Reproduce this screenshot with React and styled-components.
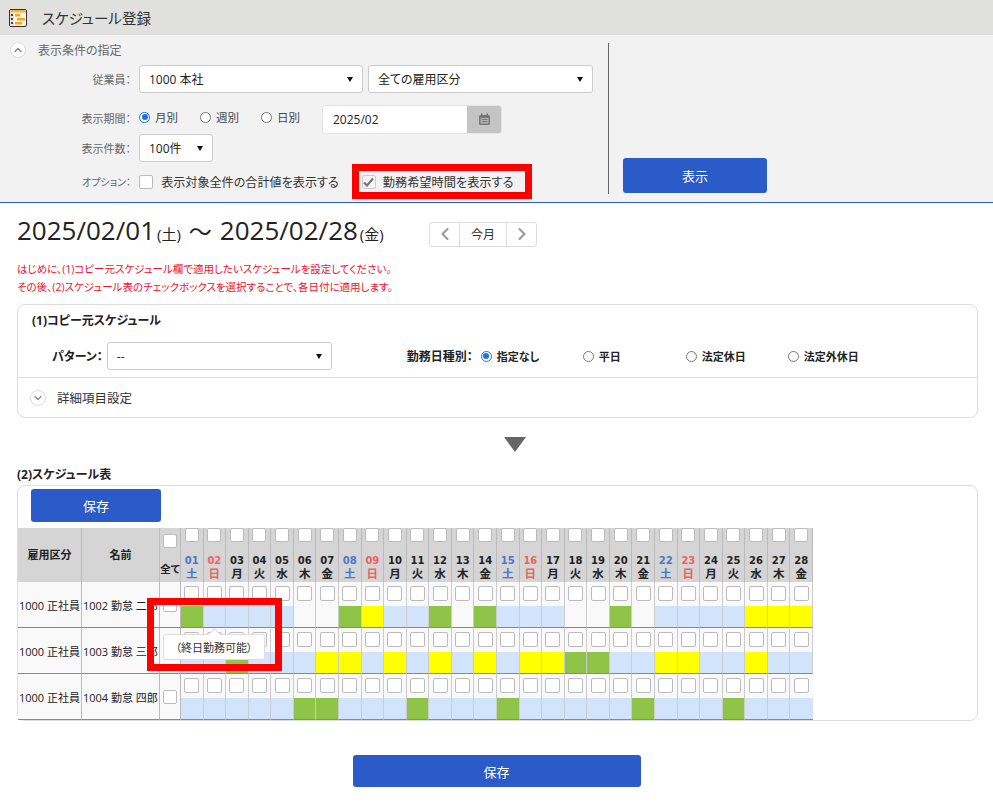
import React from 'react';
import styled, { createGlobalStyle } from 'styled-components';
import { ChevronLeft, ChevronRight, ChevronUp, ChevronDown } from 'lucide-react';

const GlobalStyle = createGlobalStyle`
  html, body { margin: 0; padding: 0; background: #fff; }
  body {
    font-family: "Open Sans", "Noto Sans CJK JP", sans-serif;
    font-feature-settings: "palt";
    color: #222;
    font-size: 12px;
  }
`;

const Page = styled.div`
  width: 993px;
  height: 810px;
  overflow: hidden;
`;

const TitleBar = styled.header`
  height: 35px;
  background: #e0e0de;
  display: flex;
  align-items: center;
  padding-left: 9px;
  gap: 15px;
  font-size: 14.5px;
  color: #333;
`;

const Conditions = styled.section`
  height: 168px;
  box-sizing: border-box;
  background: #f2f2f2;
  border-bottom: 1px solid #2a5bc8;
  display: flex;
  padding-top: 8px;
`;

const CondLeft = styled.div`
  width: 609px;
  height: 151px;
  box-sizing: border-box;
  border-right: 1px solid #666;
`;

const CondRight = styled.div`
  flex: 1;
  display: flex;
  align-items: flex-end;
  padding: 0 0 9px 14px;
`;

const SectionHead = styled.div`
  display: flex;
  align-items: center;
  gap: 12px;
  height: 14px;
  padding-left: 10px;
  color: #666;
  font-size: 12px;
`;

const RoundToggle = styled.span`
  width: 16px;
  height: 16px;
  flex: none;
  border-radius: 50%;
  border: 1.5px solid #ddd;
  background: #fff;
  box-sizing: border-box;
  display: inline-flex;
  align-items: center;
  justify-content: center;
  color: #888;
`;

const FormRow = styled.div`
  display: flex;
  align-items: center;
  height: ${p => p.$h}px;
  margin-top: ${p => p.$top || 0}px;
  gap: 5px;
`;

const FieldLabel = styled.span`
  width: 131px;
  margin-right: 3px;
  margin-bottom: ${p => p.$raise || 0}px;
  box-sizing: border-box;
  text-align: right;
  color: #666;
  font-size: ${p => p.$size || 11}px;
  white-space: nowrap;
`;

const Select = styled.div`
  width: ${p => p.$w}px;
  height: 28px;
  box-sizing: border-box;
  background: #fff;
  border: 1px solid #ccc;
  border-radius: 3px;
  display: flex;
  align-items: center;
  justify-content: space-between;
  padding: 0 9px;
  font-size: 12px;
  font-weight: 400;
  color: #222;
  &::after {
    content: "";
    border-left: 3.5px solid transparent;
    border-right: 3.5px solid transparent;
    border-top: 5px solid #111;
  }
`;

const RadioItem = styled.label`
  display: inline-flex;
  align-items: center;
  gap: ${p => p.$gap || 5}px;
  width: ${p => p.$w ? `${p.$w}px` : 'auto'};
  margin-bottom: ${p => p.$raise || 0}px;
  font-size: ${p => p.$size || 12}px;
  font-weight: ${p => p.$bold ? 700 : 400};
  color: ${p => p.$bold ? '#222' : '#444'};
  white-space: nowrap;
`;

const RadioDot = styled.span`
  width: 11px;
  height: 11px;
  border-radius: 50%;
  box-sizing: border-box;
  background: #fff;
  border: 1px solid ${p => p.$on ? '#1a73e8' : '#777'};
  display: inline-flex;
  align-items: center;
  justify-content: center;
  &::after {
    content: "";
    width: 6px;
    height: 6px;
    border-radius: 50%;
    background: ${p => p.$on ? '#1a73e8' : 'transparent'};
  }
`;

const DateGroup = styled.div`
  display: flex;
  width: 180px;
  height: 29px;
  margin-left: 16px;
  border-radius: 3px;
  overflow: hidden;
  border: 1px solid #e4e4e4;
  box-sizing: border-box;
  background: #fff;
`;

const DateValue = styled.div`
  flex: 1;
  display: flex;
  align-items: center;
  padding-left: 10px;
  font-size: 12px;
`;

const DateButton = styled.div`
  width: 34px;
  background: #c4c4c4;
  display: flex;
  align-items: center;
  justify-content: center;
`;

const CheckBox = styled.span`
  width: ${p => p.$s || 14}px;
  height: ${p => p.$s || 14}px;
  flex: none;
  box-sizing: border-box;
  display: inline-flex;
  align-items: center;
  justify-content: center;
  background: ${p => p.$muted ? '#f4f4f4' : '#fff'};
  border: 1px solid ${p => p.$muted ? '#ccc' : '#bbb'};
  border-radius: 2px;
`;

const OptionText = styled.span`
  font-size: ${p => p.$size || 12}px;
  color: #333;
  white-space: nowrap;
`;

const Highlight = styled.div`
  box-sizing: border-box;
  width: 180px;
  height: 35px;
  margin-left: 8px;
  border: 7px solid #f00;
  display: flex;
  align-items: center;
  gap: 7px;
  padding-left: 3px;
`;

const PrimaryButton = styled.button`
  width: ${p => p.$w}px;
  height: ${p => p.$h}px;
  background: #2a5bc8;
  color: #fff;
  border: 0;
  border-radius: 3px;
  font: inherit;
  font-size: 13px;
  padding: 0;
`;

const DateHeading = styled.div`
  display: flex;
  align-items: center;
  height: 30px;
  margin: 16px 0 0 17px;
`;

const DateRange = styled.h1`
  margin: 0 0 8px;
  width: 412px;
  font-size: 26px;
  font-weight: 400;
  color: #222;
  white-space: nowrap;
  small { font-size: 15px; margin-left: 2px; }
  i { font-style: normal; margin: 0 8px; font-size: 23px; }
`;

const MonthNav = styled.div`
  display: flex;
  width: 108px;
  height: 25px;
  box-sizing: border-box;
  border: 1px solid #ddd;
  border-radius: 3px;
`;

const NavCell = styled.span`
  flex: ${p => p.$wide ? 1 : 'none'};
  width: ${p => p.$wide ? 'auto' : '29px'};
  display: flex;
  align-items: center;
  justify-content: center;
  font-size: 12px;
  color: #333;
  & + & { border-left: 1px solid #ddd; }
`;

const Notice = styled.p`
  margin: 12px 0 0 17px;
  color: #f01030;
  font-size: 10.5px;
  line-height: 17.5px;
  white-space: nowrap;
`;

const Card = styled.div`
  margin: ${p => p.$top}px 15px 0 17px;
  box-sizing: border-box;
  height: ${p => p.$h}px;
  border: 1px solid #ddd;
  border-radius: 8px;
  position: relative;
`;

const CardTitle = styled.h3`
  margin: 0;
  padding: 6px 0 0 14px;
  height: 37px;
  box-sizing: border-box;
  font-size: 12px;
  font-weight: 700;
  color: #222;
`;

const PatternRow = styled.div`
  display: flex;
  align-items: center;
  height: 28px;
  padding-left: 34px;
  font-size: 12px;
  font-weight: 700;
  gap: 4px;
`;

const DayTypeGroup = styled.div`
  display: flex;
  align-items: center;
  margin-left: 71px;
  gap: 6px;
`;

const DayTypeLabel = styled.span`
  margin-right: 2px;
  white-space: nowrap;
`;

const DetailRow = styled.div`
  margin-top: 7px;
  border-top: 1px solid #ddd;
  height: 39px;
  display: flex;
  align-items: center;
  padding-left: 12px;
  gap: 11px;
  font-size: 12.5px;
  color: #333;
`;

const DownTriangle = styled.div`
  width: 0;
  margin: 19px 0 0 504px;
  border-left: 11px solid transparent;
  border-right: 11px solid transparent;
  border-top: 15px solid #666;
`;

const TableTitle = styled.h3`
  margin: 14px 0 0 17px;
  height: 17px;
  line-height: 17px;
  font-size: 12px;
  font-weight: 700;
  color: #222;
`;

const SaveBar = styled.div`
  padding: 3px 0 0 13px;
  height: 42px;
  box-sizing: border-box;
`;

const ScheduleGrid = styled.div`
  display: grid;
  grid-template-columns: 64px 78px 21px repeat(28, 1fr);
  width: 795px;
`;

const HeadCell = styled.div`
  height: 54px;
  box-sizing: border-box;
  background: #d4d5d4;
  border-right: 1px solid #bbb;
  display: flex;
  flex-direction: column;
  align-items: center;
  justify-content: ${p => p.$top ? 'center' : 'flex-start'};
  font-size: 11px;
  font-weight: 700;
  color: #222;
  padding-bottom: ${p => p.$top ? 3 : 0}px;
  &:last-child { border-right: 0; }
`;

const AllCell = styled(HeadCell)`
  padding-top: 6px;
  gap: 13px;
  font-size: 10.5px;
  white-space: nowrap;
`;

const DayHead = styled(HeadCell)`
  color: ${p => p.$c};
  line-height: 13px;
  b { display: block; margin-top: 12px; font-family: "DejaVu Sans", sans-serif; font-size: 10px; }
  span { font-size: 11.5px; }
`;

const BodyCell = styled.div`
  height: 46px;
  box-sizing: border-box;
  background: #f9f9f9;
  border-right: 1px solid #bbb;
  border-bottom: 1px solid #888;
  display: flex;
  align-items: center;
  justify-content: ${p => p.$center ? 'center' : 'flex-start'};
  padding-left: ${p => p.$center ? 0 : 1}px;
  font-size: 11px;
  color: #222;
  white-space: nowrap;
  overflow: hidden;
`;

const DayCell = styled.div`
  height: 46px;
  box-sizing: border-box;
  background: #f9f9f9;
  border-right: 1px solid #ccc;
  border-bottom: 1px solid #888;
  display: flex;
  flex-direction: column;
  align-items: center;
  &:last-child { border-right: 0; }
`;

const DayCheckArea = styled.div`
  height: 24px;
  padding-top: 4px;
  box-sizing: border-box;
`;

const Shift = styled.div`
  height: 21px;
  align-self: stretch;
  background: ${p => p.$c};
`;

const Tooltip = styled.div`
  position: absolute;
  left: 145px;
  top: 148px;
  width: 102px;
  height: 26px;
  box-sizing: border-box;
  background: #fff;
  border: 1px solid #ddd;
  border-radius: 3px;
  display: flex;
  align-items: center;
  justify-content: center;
  font-size: 11px;
  color: #333;
  &::before {
    content: "";
    position: absolute;
    left: 46px;
    top: -5px;
    width: 8px;
    height: 8px;
    background: #fff;
    border-left: 1px solid #ddd;
    border-top: 1px solid #ddd;
    transform: rotate(45deg);
  }
`;

const RedFrame = styled.div`
  position: absolute;
  left: 129px;
  top: 112px;
  width: 135px;
  height: 73px;
  box-sizing: border-box;
  border: 7px solid #f00;
  pointer-events: none;
`;

const BottomBar = styled.div`
  display: flex;
  justify-content: center;
  margin-top: 34px;
`;

const weekdays = ['土', '日', '月', '火', '水', '木', '金'];
const code = { g: '#8ec549', y: '#ffff00', b: '#d1e4fb', n: 'transparent' };

const rows = [
  { name: '1002 勤怠 二郎', shifts: 'gbbbbnngybbgngbbbnngnbbbbyyy' },
  { name: '1003 勤怠 三郎', shifts: 'bbgbbbyybybybybyyggbbyybbybb' },
  { name: '1004 勤怠 四郎', shifts: 'bbbbbggbbbgbbbgbbbbbgbbbgbbb' },
];

const dayColor = i => (i % 7 === 0 ? '#4a76d0' : i % 7 === 1 ? '#f26060' : '#222');

function CalendarGlyph() {
  return (
    <svg width="13" height="13" viewBox="0 0 13 13">
      <rect x="1" y="2" width="11" height="10" rx="1.5" fill="#777" />
      <rect x="2.5" y="5" width="8" height="5.5" fill="#b5b5b5" />
      <rect x="3" y="0.5" width="1.5" height="3" fill="#777" />
      <rect x="8.5" y="0.5" width="1.5" height="3" fill="#777" />
      <rect x="3.5" y="6" width="6" height="1" fill="#777" />
      <rect x="3.5" y="8" width="6" height="1" fill="#777" />
    </svg>
  );
}

function ScheduleIcon() {
  return (
    <svg width="18" height="18" viewBox="0 0 18 18">
      <rect x="0.5" y="0.5" width="17" height="17" rx="1.5" fill="#fdf6e6" stroke="#333" />
      <rect x="1" y="1" width="16" height="2.5" fill="#f5b642" />
      <rect x="1" y="3.5" width="4" height="13.5" fill="#e4e4e4" />
      <rect x="2" y="5" width="2" height="2" fill="#444" />
      <rect x="2" y="9" width="2" height="2" fill="#444" />
      <rect x="2" y="13" width="2" height="2" fill="#444" />
      <rect x="6" y="5" width="5" height="2.5" fill="#f5a623" />
      <rect x="8" y="9" width="8" height="2.5" fill="#f5a623" />
      <rect x="6" y="13" width="7" height="2.5" fill="#f5a623" />
    </svg>
  );
}

function CheckMark() {
  return (
    <svg width="11" height="10" viewBox="0 0 11 10">
      <path d="M1 5.5 L4 8.5 L10 1.5" fill="none" stroke="#777" strokeWidth="2.2" />
    </svg>
  );
}

export default function App() {
  return (
    <Page>
      <GlobalStyle />
      <TitleBar>
        <ScheduleIcon />
        スケジュール登録
      </TitleBar>

      <Conditions>
        <CondLeft>
          <SectionHead>
            <RoundToggle><ChevronUp size={12} strokeWidth={3} /></RoundToggle>
            表示条件の指定
          </SectionHead>
          <FormRow $h={28} $top={8}>
            <FieldLabel>従業員：</FieldLabel>
            <Select $w={224}>1000 本社</Select>
            <Select $w={225}>全ての雇用区分</Select>
          </FormRow>
          <FormRow $h={29} $top={12}>
            <FieldLabel $raise={3}>表示期間：</FieldLabel>
            <RadioItem $w={56} $size={11.5} $raise={5}><RadioDot $on />月別</RadioItem>
            <RadioItem $w={56} $size={11.5} $raise={5}><RadioDot />週別</RadioItem>
            <RadioItem $w={40} $size={11.5} $raise={5}><RadioDot />日別</RadioItem>
            <DateGroup>
              <DateValue>2025/02</DateValue>
              <DateButton><CalendarGlyph /></DateButton>
            </DateGroup>
          </FormRow>
          <FormRow $h={28}>
            <FieldLabel>表示件数：</FieldLabel>
            <Select $w={74}>100件</Select>
          </FormRow>
          <FormRow $h={35} $top={2}>
            <FieldLabel $size={10}>オプション：</FieldLabel>
            <CheckBox />
            <OptionText $size={12.1}>&nbsp;表示対象全件の合計値を表示する</OptionText>
            <Highlight>
              <CheckBox $s={14} $muted><CheckMark /></CheckBox>
              <OptionText $size={12.2}>勤務希望時間を表示する</OptionText>
            </Highlight>
          </FormRow>
        </CondLeft>
        <CondRight>
          <PrimaryButton $w={144} $h={35}>表示</PrimaryButton>
        </CondRight>
      </Conditions>

      <DateHeading>
        <DateRange>
          2025/02/01<small>(土)</small><i>〜</i>2025/02/28<small>(金)</small>
        </DateRange>
        <MonthNav>
          <NavCell><ChevronLeft size={20} color="#999" strokeWidth={2.5} /></NavCell>
          <NavCell $wide>今月</NavCell>
          <NavCell><ChevronRight size={20} color="#999" strokeWidth={2.5} /></NavCell>
        </MonthNav>
      </DateHeading>

      <Notice>
        はじめに、(1)コピー元スケジュール欄で適用したいスケジュールを設定してください。<br />
        その後、(2)スケジュール表のチェックボックスを選択することで、各日付に適用します。
      </Notice>

      <Card $top={8} $h={114}>
        <CardTitle>(1)コピー元スケジュール</CardTitle>
        <PatternRow>
          パターン：
          <Select $w={225}>--</Select>
          <DayTypeGroup>
            <DayTypeLabel>勤務日種別：</DayTypeLabel>
            <RadioItem $w={96} $bold $size={11}><RadioDot $on />指定なし</RadioItem>
            <RadioItem $w={97} $bold $size={11}><RadioDot />平日</RadioItem>
            <RadioItem $w={96} $bold $size={11}><RadioDot />法定休日</RadioItem>
            <RadioItem $bold $size={11}><RadioDot />法定外休日</RadioItem>
          </DayTypeGroup>
        </PatternRow>
        <DetailRow>
          <RoundToggle><ChevronDown size={12} strokeWidth={2.5} /></RoundToggle>
          詳細項目設定
        </DetailRow>
      </Card>

      <DownTriangle />
      <TableTitle>(2)スケジュール表</TableTitle>

      <Card $top={2} $h={236}>
        <SaveBar>
          <PrimaryButton $w={130} $h={33}>保存</PrimaryButton>
        </SaveBar>
        <ScheduleGrid>
          <HeadCell $top>雇用区分</HeadCell>
          <HeadCell $top>名前</HeadCell>
          <AllCell><CheckBox $s={14} />全て</AllCell>
          {Array.from({ length: 28 }, (_, i) => (
            <DayHead key={i} $c={dayColor(i)}>
              <CheckBox $s={14} />
              <b>{String(i + 1).padStart(2, '0')}</b>
              <span>{weekdays[i % 7]}</span>
            </DayHead>
          ))}
          {rows.map(r => (
            <React.Fragment key={r.name}>
              <BodyCell>1000 正社員</BodyCell>
              <BodyCell>{r.name}</BodyCell>
              <BodyCell $center><CheckBox $s={14} /></BodyCell>
              {r.shifts.split('').map((s, i) => (
                <DayCell key={i}>
                  <DayCheckArea><CheckBox $s={15} /></DayCheckArea>
                  <Shift $c={code[s]} />
                </DayCell>
              ))}
            </React.Fragment>
          ))}
        </ScheduleGrid>
        <Tooltip>（終日勤務可能）</Tooltip>
        <RedFrame />
      </Card>

      <BottomBar>
        <PrimaryButton $w={288} $h={32}>保存</PrimaryButton>
      </BottomBar>
    </Page>
  );
}
